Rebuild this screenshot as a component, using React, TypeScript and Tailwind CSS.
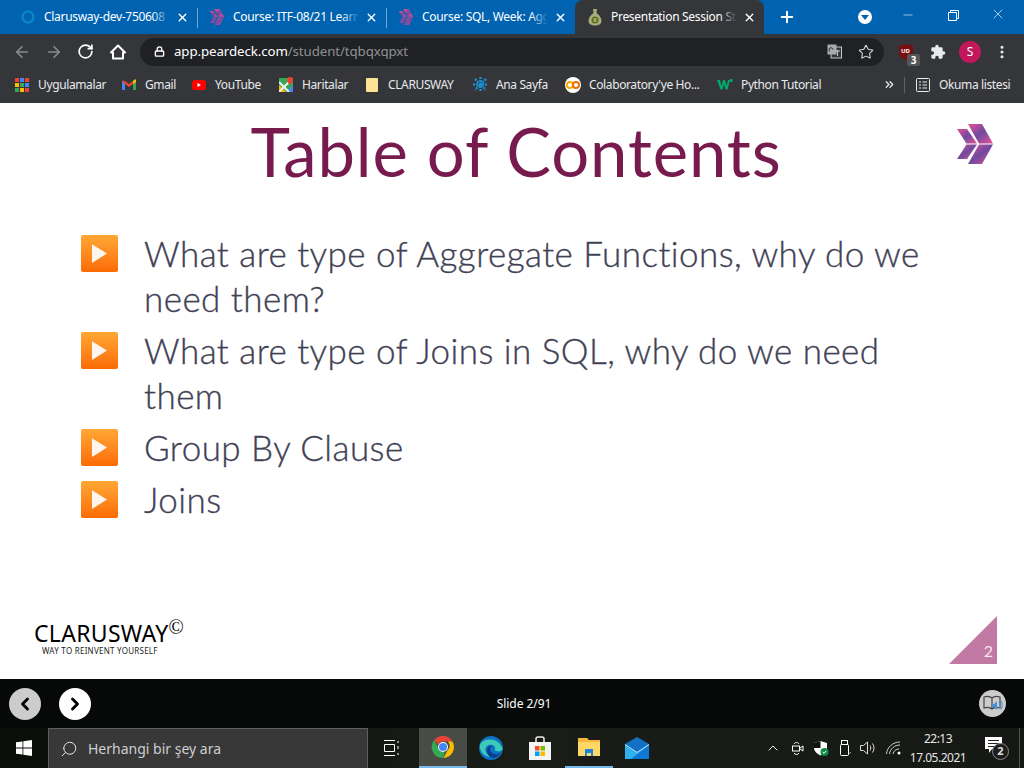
import React from "react";
import { ArrowLeft, ArrowRight, RotateCw, Lock, Star, MoreVertical, X, Plus, Search, ChevronLeft, ChevronRight, ChevronUp, ChevronsRight, Minus } from "lucide-react";

const ui = { fontFamily: '"Noto Sans", "Open Sans", sans-serif' };

function Chevrons({ size = 16, id = "g" }: { size?: number; id?: string }) {
  return (
    <svg width={size} height={size} viewBox="0 0 36 40">
      <defs>
        <linearGradient id={id} x1="0" y1="0" x2="1" y2="1">
          <stop offset="0" stopColor="#e8509a" />
          <stop offset="0.5" stopColor="#6f4a9f" />
          <stop offset="1" stopColor="#e8509a" />
        </linearGradient>
      </defs>
      <path d="M0 5h10l10 14.500H9.500z" fill={`url(#${id})`} />
      <path d="M9.500 20.500H20L10 35H0z" fill={`url(#${id})`} />
      <path d="M11 0h14l11 19.500H22z" fill={`url(#${id})`} />
      <path d="M22 20.500h14L25 40H11z" fill={`url(#${id})`} />
    </svg>
  );
}

function Ring() {
  return (
    <svg width="14" height="14" viewBox="0 0 14 14">
      <circle cx="7" cy="7" r="5.500" fill="none" stroke="#0d82c9" strokeWidth="2.600" />
    </svg>
  );
}

function Pear() {
  return (
    <svg width="14" height="18" viewBox="0 0 14 18">
      <path d="M5 1h4L8.500 5c3 2 5 5 5 8 0 3-3 4.500-6.500 4.500S.5 16 .5 13c0-3 2-6 5-8z" fill="#a9ad7d" />
      <circle cx="7" cy="12" r="3.500" fill="#5f6b1e" />
      <path d="M5.500 11h3M5.500 13h3" stroke="#dfe3b0" />
    </svg>
  );
}

function Tab({ icon, title, active, sep }: { icon: React.ReactNode; title: string; active?: boolean; sep?: boolean }) {
  const fade = active ? "from-[#35363a]/0 to-[#35363a]" : "from-[#0063b1]/0 to-[#0063b1]";
  return (
    <div className={`relative flex h-[34px] w-[189px] shrink-0 items-center pl-[10px] ${active ? "rounded-t-[8px] bg-[#35363a]" : ""}`}>
      <div className="flex w-[20px] justify-center">{icon}</div>
      <div className="relative ml-[6px] w-[126px] overflow-hidden whitespace-nowrap text-[12px] text-white" style={ui}>
        <span className="tracking-[-0.3px]">{title}</span>
        <div className={`absolute inset-y-0 right-0 w-[18px] bg-gradient-to-r ${fade}`} />
      </div>
      <X className="ml-[6px] text-white" size={13} strokeWidth={2.6} />
      {sep && <div className="absolute right-[-0.5px] top-[8px] h-[20px] w-px bg-[#7aa8cf]" />}
    </div>
  );
}

function Apps() {
  const c = ["#ea4335", "#4285f4", "#ea4335", "#fbbc05", "#34a853", "#4285f4", "#34a853", "#fbbc05", "#ea4335"];
  return (
    <div className="grid h-[14px] w-[14px] grid-cols-3 gap-px">
      {c.map((x, i) => (
        <div key={i} className="h-[4px] w-[4px]" style={{ background: x }} />
      ))}
    </div>
  );
}

function Bookmark({ icon, label, w }: { icon: React.ReactNode; label: string; w: string }) {
  return (
    <div className={`flex h-full shrink-0 items-center ${w}`}>
      <div className="flex w-[16px] justify-center">{icon}</div>
      <span className="ml-[8px] whitespace-nowrap text-[12px] tracking-[-0.38px] text-[#e8eaed]" style={ui}>{label}</span>
    </div>
  );
}

const bullets: { lines: string[] }[] = [
  { lines: ["What are type of Aggregate Functions, why do we", "need them?"] },
  { lines: ["What are type of Joins in SQL, why do we need", "them"] },
  { lines: ["Group By Clause"] },
  { lines: ["Joins"] },
];

function PlayIcon() {
  return (
    <div className="mt-[4px] flex h-[37px] w-[37px] shrink-0 items-center justify-center rounded-[2px] bg-gradient-to-b from-[#ffa733] to-[#fb6a00]">
      <svg width="15" height="19" viewBox="0 0 16 20"><path d="M0 0l16 10L0 20z" fill="#fdf6ee" /></svg>
    </div>
  );
}

function ChromeLogo() {
  return (
    <svg width="24" height="24" viewBox="0 0 24 24">
      <path d="M12 1a11 11 0 0 1 9.500 5.500H12a5.500 5.500 0 0 0-5 3L3.200 5A11 11 0 0 1 12 1z" fill="#ea4335" />
      <path d="M21.500 6.500A11 11 0 0 1 12.500 23l4.200-8a5.500 5.500 0 0 0 0-8.500z" fill="#fbbc05" />
      <path d="M3.200 5l4 7.500a5.500 5.500 0 0 0 6.500 4.400L12.500 23A11 11 0 0 1 3.200 5z" fill="#34a853" />
      <circle cx="12" cy="12" r="5" fill="#fff" />
      <circle cx="12" cy="12" r="4" fill="#4285f4" />
    </svg>
  );
}

export default function App() {
  return (
    <div className="flex h-[768px] w-[1024px] flex-col overflow-hidden bg-white">
      {/* tab strip */}
      <div className="flex h-[34px] shrink-0 items-center bg-[#0063b1] pl-[8px]">
        <Tab icon={<Ring />} title="Clarusway-dev-750608 -" sep />
        <Tab icon={<Chevrons id="t1" />} title="Course: ITF-08/21 Learn" sep />
        <Tab icon={<Chevrons id="t2" />} title="Course: SQL, Week: Agg" />
        <Tab icon={<Pear />} title="Presentation Session Stu" active />
        <Plus className="ml-[14px] text-white" size={18} strokeWidth={2.6} />
        <div className="ml-[62px] flex h-[14px] w-[14px] items-center justify-center rounded-full bg-white">
          <div className="h-0 w-0 border-x-[4px] border-t-[5px] border-x-transparent border-t-[#0063b1]" />
        </div>
        <Minus className="ml-[29px] -translate-y-[2px] text-white" size={14} strokeWidth={1} />
        <svg className="ml-[33px] -translate-y-[2px]" width="11" height="11" viewBox="0 0 11 11" fill="none" stroke="#fff">
          <path d="M.5 2.500h8v8h-8zM2.500 2.500v-2h8v8h-2" />
        </svg>
        <X className="ml-[31px] -translate-y-[3px] text-white" size={16} strokeWidth={1} />
      </div>

      {/* toolbar */}
      <div className="flex h-[35px] shrink-0 items-center bg-[#35363a] pl-[13px]">
        <ArrowLeft className="text-[#8a8c8f]" size={18} strokeWidth={2.2} />
        <ArrowRight className="ml-[14px] text-[#8a8c8f]" size={18} strokeWidth={2.2} />
        <RotateCw className="ml-[14px] text-white" size={17} strokeWidth={2.4} />
        <svg className="ml-[15px]" width="18" height="18" viewBox="0 0 18 18" fill="none" stroke="#fff" strokeWidth="2">
          <path d="M2 9.500L9 2.500l7 7h-2v6H4v-6z" strokeLinejoin="round" />
        </svg>
        <div className="ml-[13px] flex h-[28px] w-[744px] items-center rounded-full bg-[#202124] pl-[14px]">
          <Lock className="text-white" size={11} strokeWidth={3} />
          <span className="ml-[9px] text-[13.3px] tracking-[-0.1px]" style={ui}>
            <span className="text-white">app.peardeck.com</span>
            <span className="text-[#8f9194]">/student/tqbqxqpxt</span>
          </span>
          <svg className="ml-auto" width="15" height="15" viewBox="0 0 15 15">
            <rect x="4" y="3" width="10.500" height="11" fill="#35363a" stroke="#c4c6c9" />
            <rect x=".5" y=".5" width="9" height="10" fill="#a8aaad" />
            <path d="M3 7.500a2 2 0 1 1 3-2" stroke="#202124" fill="none" />
            <path d="M8 7h5M10.500 6v6" stroke="#c4c6c9" />
          </svg>
          <Star className="ml-[16px] mr-[10px] text-[#d6d8da]" size={16} strokeWidth={1.6} />
        </div>
        <div className="relative ml-[15px] h-[16px] w-[14px]">
          <svg width="14" height="16" viewBox="0 0 14 16"><path d="M0 2l7-2 7 2v7c0 3-3 5.500-7 7-4-1.500-7-4-7-7z" fill="#7a0d10" /></svg>
          <span className="absolute left-[2px] top-[3px] text-[6px] font-bold leading-[8px] text-white" style={ui}>UD</span>
          <span className="absolute left-[8px] top-[10px] h-[12px] w-[13px] rounded-[2px] bg-[#555] text-center text-[10px] font-bold leading-[12px] text-white" style={ui}>3</span>
        </div>
        <svg className="ml-[17px]" width="16" height="16" viewBox="0 0 24 24" fill="#e8eaed">
          <path d="M20.500 11H19V7a2 2 0 0 0-2-2h-4V3.500a2.500 2.500 0 0 0-5 0V5H4a2 2 0 0 0-2 2v3.800h1.500a2.700 2.700 0 0 1 0 5.400H2V20a2 2 0 0 0 2 2h3.800v-1.500a2.700 2.700 0 0 1 5.400 0V22H17a2 2 0 0 0 2-2v-4h1.500a2.500 2.500 0 0 0 0-5z" />
        </svg>
        <div className="ml-[13px] flex h-[22px] w-[22px] items-center justify-center rounded-full bg-[#c2185b] text-[12px] text-white" style={ui}>S</div>
        <MoreVertical className="ml-[13px] text-[#e8eaed]" size={16} strokeWidth={2.6} />
      </div>

      {/* bookmarks */}
      <div className="flex h-[34px] shrink-0 items-center bg-[#35363a] pb-[3px] pl-[14px]">
        <Bookmark w="w-[107px]" icon={<Apps />} label="Uygulamalar" />
        <Bookmark w="w-[70px]" label="Gmail" icon={
          <svg width="14" height="11" viewBox="0 0 14 11"><path d="M0 1.500V10a1 1 0 0 0 1 1h2V5l4 3 4-3v6h2a1 1 0 0 0 1-1V1.500L11 2 7 5 3 2z" fill="#ea4335" /><path d="M0 2v8a1 1 0 0 0 1 1h2V5z" fill="#4285f4" /><path d="M14 2v8a1 1 0 0 1-1 1h-2V5z" fill="#34a853" /><path d="M11 2l1.500-1.500H14V3l-3 2z" fill="#fbbc05" /></svg>
        } />
        <Bookmark w="w-[87px]" label="YouTube" icon={
          <svg width="14" height="10" viewBox="0 0 14 10"><rect width="14" height="10" rx="2.500" fill="#f00" /><path d="M5.500 3v4L9 5z" fill="#fff" /></svg>
        } />
        <Bookmark w="w-[86px]" label="Haritalar" icon={
          <svg width="15" height="15" viewBox="0 0 15 15">
            <rect y="1" width="14" height="14" fill="#34a853" />
            <path d="M0 15V8l7 7z" fill="#fbbc05" />
            <path d="M7 15l7-7v7z" fill="#4285f4" />
            <path d="M0 5l10 10M0 15L11 4" stroke="#f1f1f1" strokeWidth="2" />
            <path d="M11 0a3 3 0 0 1 3 3c0 2-3 5-3 5s-3-3-3-5a3 3 0 0 1 3-3z" fill="#ea4335" />
          </svg>
        } />
        <Bookmark w="w-[108px]" label="CLARUSWAY" icon={
          <div className="h-[14px] w-[12px] rounded-[1px] bg-[#fde293]" />
        } />
        <Bookmark w="w-[93px]" label="Ana Sayfa" icon={
          <svg width="15" height="15" viewBox="0 0 15 15"><path d="M7.500 0v15M0 7.500h15M2 2l11 11M13 2L2 13" stroke="#1b8fd0" strokeWidth="2.500" strokeDasharray="2 1" /></svg>
        } />
        <Bookmark w="w-[152px]" label="Colaboratory'ye Ho..." icon={
          <div className="flex h-[16px] w-[16px] items-center justify-center rounded-full bg-white">
            <svg width="14" height="8" viewBox="0 0 14 8" fill="none" strokeWidth="2"><circle cx="4" cy="4" r="3" stroke="#f9ab00" /><circle cx="10" cy="4" r="3" stroke="#e8710a" /></svg>
          </div>
        } />
        <Bookmark w="w-[166px]" label="Python Tutorial" icon={
          <svg width="16" height="11" viewBox="0 0 16 11"><path d="M0 1h3l1.500 6L6 1h2l1.500 6L11 1h2L10.500 10.500h-2L7 5l-1.500 5.500h-2z" fill="#04aa6d" /><path d="M13 0h2.500v3H13z" fill="#04aa6d" /></svg>
        } />
        <ChevronsRight className="text-[#e8eaed]" size={13} strokeWidth={2.4} />
        <div className="ml-[8px] h-[16px] w-px bg-[#5f6368]" />
        <svg className="ml-[11px]" width="14" height="14" viewBox="0 0 14 14" fill="none" stroke="#e8eaed">
          <rect x=".5" y=".5" width="13" height="13" rx="1" />
          <path d="M3 4h2M6.500 4H11M3 7h2M6.500 7H11M3 10h2M6.500 10H11" />
        </svg>
        <span className="ml-[9px] whitespace-nowrap text-[12px] tracking-[-0.38px] text-[#e8eaed]" style={ui}>Okuma listesi</span>
      </div>

      {/* slide */}
      <div className="relative flex min-h-0 flex-1 flex-col bg-white">
        <h1 className="mt-[10px] pl-[8px] text-center text-[67px] font-normal leading-[76px] tracking-[0.9px] text-[#771a4e]" style={{ fontFamily: 'Lato, sans-serif' }}>Table of Contents</h1>
        <div className="absolute right-[29px] top-[21px]"><Chevrons size={40} id="main" /></div>
        <div className="ml-[81px] mt-[42px] flex flex-col gap-[7px]">
          {bullets.map((b, i) => (
            <div key={i} className="flex items-start">
              <PlayIcon />
              <div className="ml-[26px] text-[35px] font-light leading-[45px] tracking-[0.45px] text-[#3f4255] [-webkit-text-stroke:0.35px_#3f4255]" style={{ fontFamily: 'Lato, sans-serif' }}>
                {b.lines.map((l) => (
                  <div key={l} className="whitespace-nowrap">{l}</div>
                ))}
              </div>
            </div>
          ))}
        </div>
        <div className="mt-auto flex items-end justify-between pb-[15px] pl-[34px] pr-[27px]">
          <div className="mb-[8px] text-black">
            <div className="flex items-start">
              <span className="text-[23px] leading-[26px] tracking-[0.3px]" style={ui}>CLARUSWAY</span>
              <span className="-mt-[4px] text-[20px] leading-[22px]" style={{ fontFamily: '"Liberation Serif", serif' }}>©</span>
            </div>
            <div className="ml-[8px] text-[8px] leading-[10px] tracking-[0.25px] text-[#222]" style={ui}>WAY TO REINVENT YOURSELF</div>
          </div>
          <div className="relative h-[48px] w-[48px]">
            <svg width="48" height="48" viewBox="0 0 48 48"><path d="M48 0v48H0z" fill="#c178a3" /></svg>
            <span className="absolute bottom-[3px] right-[4px] text-[16px] leading-[20px] text-[#f3e6ee]" style={{ fontFamily: 'Lato, sans-serif' }}>2</span>
          </div>
        </div>
      </div>

      {/* slide controls */}
      <div className="flex h-[49px] shrink-0 items-center bg-[#070909] pl-[9px] pr-[18px]">
        <div className="flex h-[32px] w-[32px] items-center justify-center rounded-full bg-[#cccccc]">
          <ChevronLeft className="text-black" size={20} strokeWidth={3.4} />
        </div>
        <div className="ml-[18px] flex h-[32px] w-[32px] items-center justify-center rounded-full bg-white">
          <ChevronRight className="text-black" size={20} strokeWidth={3.4} />
        </div>
        <div className="flex-1 pr-[22px] text-center text-[12px] tracking-[-0.05px] text-white" style={ui}>Slide 2/91</div>
        <div className="flex h-[27px] w-[27px] items-center justify-center rounded-full bg-[#cccccc]">
          <svg width="20" height="18" viewBox="0 0 20 18" fill="none">
            <path d="M1 2c3-1 6-1 8 1 2-2 5-2 8-1v11c-3-1-6-1-8 1-2-2-5-2-8-1zM9 3v11" stroke="#444" strokeWidth="1.200" />
            <path d="M9 9h2l3-3v9l-3-3H9z" fill="#4a90d9" />
            <path d="M16 7c1 1.500 1 4 0 6M18 5.500c1.500 2 1.500 7 0 9" stroke="#4a90d9" />
          </svg>
        </div>
      </div>

      {/* taskbar */}
      <div className="flex h-[40px] shrink-0 items-center bg-gradient-to-r from-[#0a0e09] via-[#1a1d17] to-[#151814]">
        <div className="flex w-[48px] justify-center">
          <svg width="16" height="16" viewBox="0 0 16 16" fill="#fff"><path d="M0 2.300l6.500-.9v6.200H0zM7.300 1.300L16 0v7.600H7.300zM0 8.400h6.500v6.200L0 13.700zM7.300 8.400H16V16l-8.700-1.200z" /></svg>
        </div>
        <div className="flex h-full w-[320px] items-center border border-b-0 border-[#5f5f5f] bg-[#383838] pl-[11px]">
          <Search className="-scale-x-100 text-[#e6e6e6]" size={18} strokeWidth={1.3} />
          <span className="ml-[10px] text-[14px] text-[#cfcfcf]" style={ui}>Herhangi bir şey ara</span>
        </div>
        <svg className="ml-[15px]" width="17" height="16" viewBox="0 0 17 16" fill="none" stroke="#fff">
          <path d="M1 .5h11M1 15.500h11M1.500 4.500h10v7h-10zM15 1v2M15 6v3M15 13v2" />
        </svg>
        <div className="ml-[19px] flex h-full w-[48px] items-center justify-center border-b-2 border-[#76b9ed] bg-[#484c44]"><ChromeLogo /></div>
        <div className="flex w-[48px] justify-center">
          <svg width="24" height="24" viewBox="0 0 24 24">
            <circle cx="12" cy="12" r="12" fill="#0c72c4" />
            <path d="M1 9C3 2 20 0 23.500 13c-.5 3-6 3-8 1 3-4-4-7-7.500-4C5 12 6 18 12 21 7 21 0 17 1 9z" fill="#3ccbb8" />
            <path d="M8 14c0-3 3-5 6-4-3 0-4 4-1 7 3 2 6 2 9-1-2 5-8 7-11 5-2-2-3-4-3-7z" fill="#0a3f8e" />
          </svg>
        </div>
        <div className="flex w-[50px] justify-center">
          <svg width="24" height="24" viewBox="0 0 24 24">
            <path d="M8 6V3a2 2 0 0 1 2-2h4a2 2 0 0 1 2 2v3" fill="none" stroke="#eee" strokeWidth="1.500" />
            <rect x="1" y="6" width="22" height="18" fill="#f4f4f4" />
            <rect x="7" y="10" width="4.500" height="4.500" fill="#f25022" />
            <rect x="12.500" y="10" width="4.500" height="4.500" fill="#7fba00" />
            <rect x="7" y="15.500" width="4.500" height="4.500" fill="#00a4ef" />
            <rect x="12.500" y="15.500" width="4.500" height="4.500" fill="#ffb900" />
          </svg>
        </div>
        <div className="flex h-full w-[48px] items-center justify-center border-b-2 border-[#76b9ed]">
          <svg width="22" height="20" viewBox="0 0 22 20">
            <path d="M0 1h9l2 2h11v15H0z" fill="#f5b83d" />
            <rect y="5" width="22" height="14" fill="#ffd767" />
            <path d="M7 12h8v7h-2v-3H9v3H7z" fill="#1f83d6" />
          </svg>
        </div>
        <div className="flex w-[48px] justify-center">
          <svg width="24" height="22" viewBox="0 0 24 22">
            <path d="M12 0l12 7v15H0V7z" fill="#1370c4" />
            <path d="M0 8l12 8 12-8v14H0z" fill="#2fb0f0" />
            <path d="M24 8v14H6z" fill="#0f78d4" />
            <path d="M0 7.500l12 8 12-8" fill="none" stroke="#bfeaff" strokeWidth="1" />
          </svg>
        </div>
        <ChevronUp className="ml-[104px] text-white" size={16} strokeWidth={1.4} />
        <svg className="ml-[11px]" width="12" height="15" viewBox="0 0 12 15" fill="none" stroke="#fff">
          <path d="M2 3c1-2 4-2 5 0M2 12c1 2 4 2 5 0" />
          <rect x=".5" y="5" width="7" height="5" />
          <path d="M8 7l3-2v5l-3-2" />
        </svg>
        <svg className="ml-[10px]" width="15" height="15" viewBox="0 0 15 15">
          <path d="M6.500 0L0 2v5c0 3 3 6 6.500 7.500 3.500-1.500 6.500-4.500 6.500-7.500V2z" fill="#fff" />
          <path d="M6.500 0v7H0V2z" fill="#111" />
          <circle cx="10.500" cy="11" r="4" fill="#0f8a4b" />
          <path d="M8.700 11l1.400 1.300 2.300-2.500" stroke="#fff" fill="none" />
        </svg>
        <svg className="ml-[11px]" width="12" height="16" viewBox="0 0 12 16" fill="none" stroke="#fff">
          <rect x="1.500" y=".5" width="6" height="4" />
          <rect x=".5" y="4.500" width="8" height="11" rx="1" />
          <path d="M9 14l2-2" stroke="#999" />
        </svg>
        <svg className="ml-[8px]" width="16" height="14" viewBox="0 0 16 14" fill="none" stroke="#ddd">
          <path d="M.5 4.500h3l4-3.500v12l-4-3.500h-3zM10 4.500c1 1.500 1 3.500 0 5M12.500 2.500c2 3 2 6 0 9" />
        </svg>
        <svg className="ml-[10px]" width="16" height="14" viewBox="0 0 16 14" fill="none" stroke="#ccc">
          <path d="M.5 13C1 6 7 1 14 1M3.500 13c.5-5 5-9 10.500-9M7 13c.5-3 3-5 6-5" />
          <circle cx="13" cy="12" r="1.500" fill="#fff" stroke="none" />
        </svg>
        <div className="ml-[7px] w-[58px] text-center text-[12px] leading-[19px] tracking-[-0.5px] text-[#e6e6e6]" style={ui}>
          <div>22:13</div>
          <div>17.05.2021</div>
        </div>
        <div className="relative ml-[18px] h-[22px] w-[24px]">
          <svg width="17" height="17" viewBox="0 0 17 17"><path d="M0 0h17v12H7l-3 4v-4H0z" fill="#fff" /><path d="M3 3.500h11M3 6.500h11M3 9.500h8" stroke="#222" /></svg>
          <div className="absolute left-[7px] top-[6px] flex h-[17px] w-[17px] items-center justify-center rounded-full border border-[#8a8a8a] bg-[#1d1d1d] text-[11px] font-bold text-[#ddd]" style={ui}>2</div>
        </div>
        <div className="ml-auto mr-[4px] h-full w-px bg-[#555]" />
      </div>
    </div>
  );
}
